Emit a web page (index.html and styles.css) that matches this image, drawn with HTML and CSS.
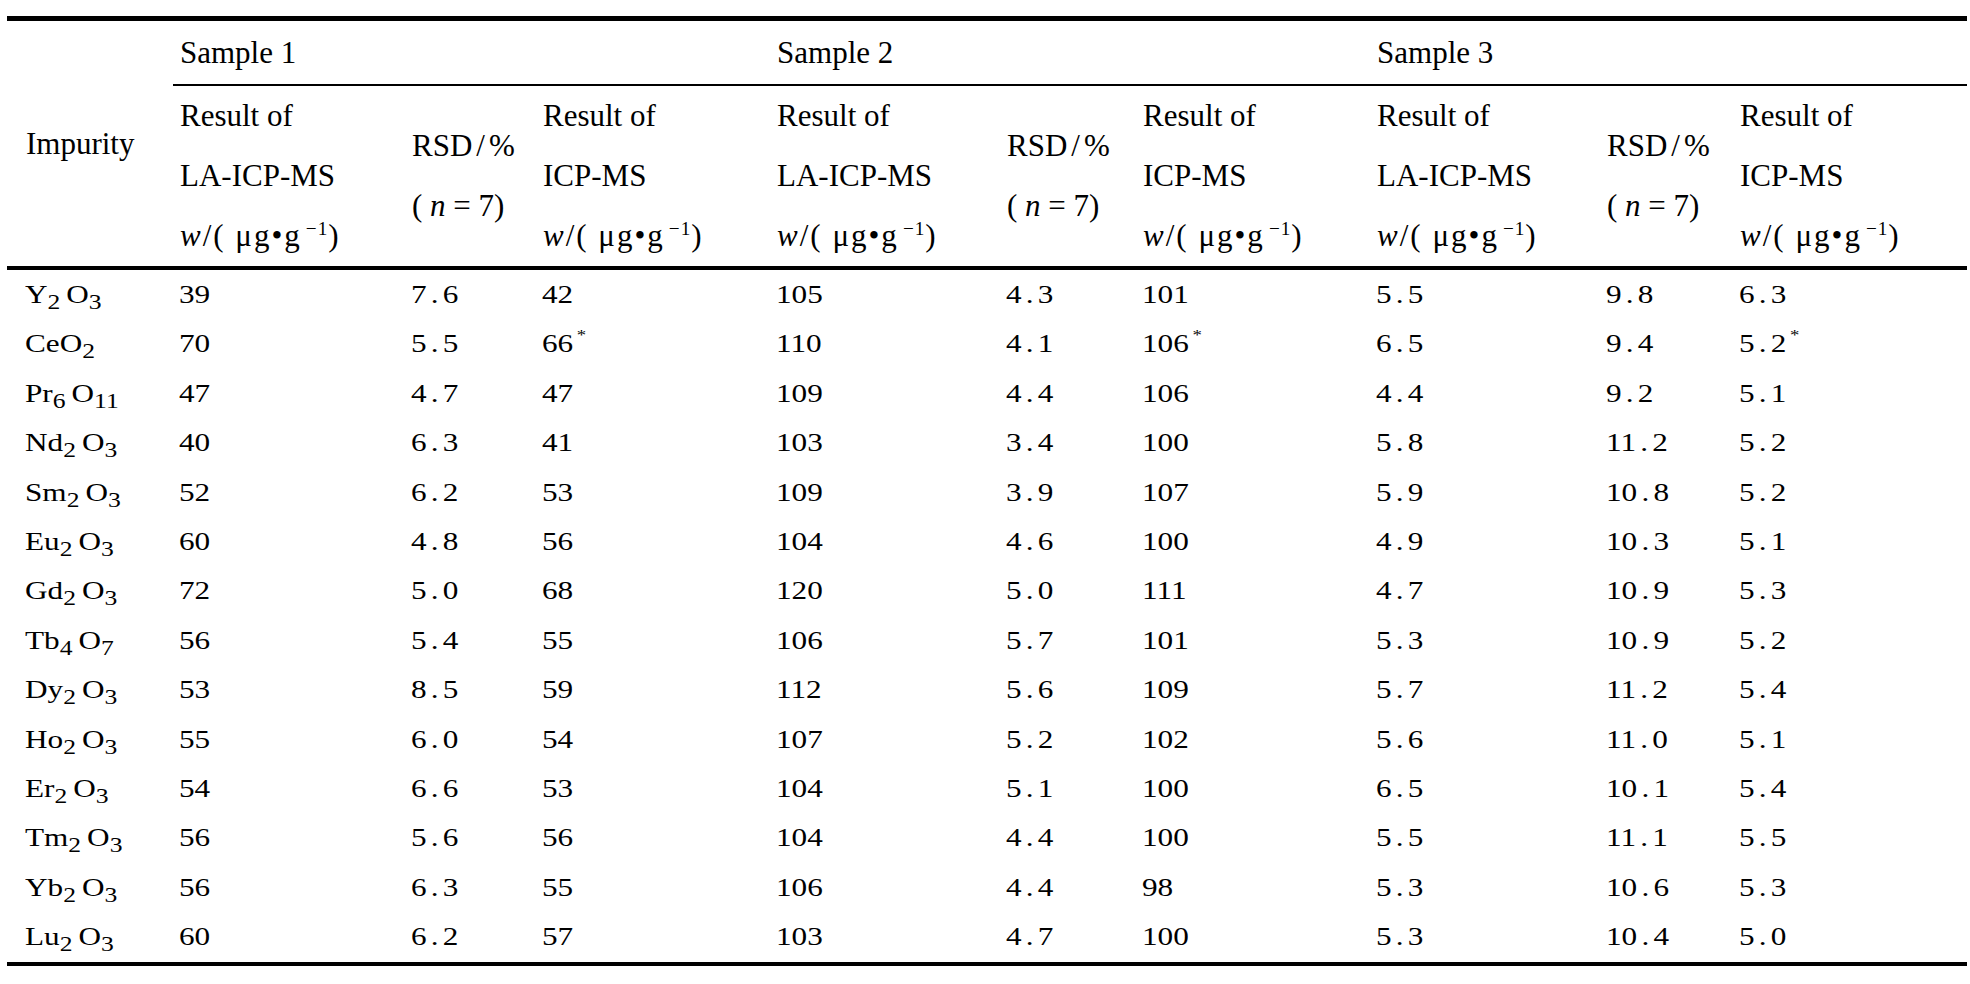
FILE: index.html
```html
<!DOCTYPE html>
<html lang="en">
<head>
<meta charset="utf-8">
<title>Impurity results</title>
<link rel="stylesheet" href="styles.css">
</head>
<body>
<table class="results">
  <colgroup>
    <col class="c-name">
    <col class="c-la"><col class="c-rsd"><col class="c-icp">
    <col class="c-la2"><col class="c-rsd2"><col class="c-icp">
    <col class="c-la2"><col class="c-rsd3"><col class="c-icp">
  </colgroup>
  <thead>
    <tr class="grp">
      <th class="impurity" rowspan="2">Impurity</th>
      <th class="sample" colspan="3">Sample 1</th>
      <th class="sample" colspan="3">Sample 2</th>
      <th class="sample" colspan="3">Sample 3</th>
    </tr>
    <tr class="sub">
      <th>Result of<br>LA-ICP-MS<br><span class="unit"><i>w</i>/( μg•g<sup>−1</sup>)</span></th>
      <th>RSD<span class="sl">/</span>%<br>( <i>n</i> = 7)</th>
      <th>Result of<br>ICP-MS<br><span class="unit"><i>w</i>/( μg•g<sup>−1</sup>)</span></th>
      <th>Result of<br>LA-ICP-MS<br><span class="unit"><i>w</i>/( μg•g<sup>−1</sup>)</span></th>
      <th>RSD<span class="sl">/</span>%<br>( <i>n</i> = 7)</th>
      <th>Result of<br>ICP-MS<br><span class="unit"><i>w</i>/( μg•g<sup>−1</sup>)</span></th>
      <th>Result of<br>LA-ICP-MS<br><span class="unit"><i>w</i>/( μg•g<sup>−1</sup>)</span></th>
      <th>RSD<span class="sl">/</span>%<br>( <i>n</i> = 7)</th>
      <th>Result of<br>ICP-MS<br><span class="unit"><i>w</i>/( μg•g<sup>−1</sup>)</span></th>
    </tr>
  </thead>
  <tbody>
    <tr><td class="name">Y<sub>2</sub>O<sub>3</sub></td><td>39</td><td>7<span class="dp">.</span>6</td><td>42</td><td>105</td><td>4<span class="dp">.</span>3</td><td>101</td><td>5<span class="dp">.</span>5</td><td>9<span class="dp">.</span>8</td><td>6<span class="dp">.</span>3</td></tr>
    <tr><td class="name">CeO<sub>2</sub></td><td>70</td><td>5<span class="dp">.</span>5</td><td>66<sup class="star">*</sup></td><td>110</td><td>4<span class="dp">.</span>1</td><td>106<sup class="star">*</sup></td><td>6<span class="dp">.</span>5</td><td>9<span class="dp">.</span>4</td><td>5<span class="dp">.</span>2<sup class="star">*</sup></td></tr>
    <tr><td class="name">Pr<sub>6</sub>O<sub>11</sub></td><td>47</td><td>4<span class="dp">.</span>7</td><td>47</td><td>109</td><td>4<span class="dp">.</span>4</td><td>106</td><td>4<span class="dp">.</span>4</td><td>9<span class="dp">.</span>2</td><td>5<span class="dp">.</span>1</td></tr>
    <tr><td class="name">Nd<sub>2</sub>O<sub>3</sub></td><td>40</td><td>6<span class="dp">.</span>3</td><td>41</td><td>103</td><td>3<span class="dp">.</span>4</td><td>100</td><td>5<span class="dp">.</span>8</td><td>11<span class="dp">.</span>2</td><td>5<span class="dp">.</span>2</td></tr>
    <tr><td class="name">Sm<sub>2</sub>O<sub>3</sub></td><td>52</td><td>6<span class="dp">.</span>2</td><td>53</td><td>109</td><td>3<span class="dp">.</span>9</td><td>107</td><td>5<span class="dp">.</span>9</td><td>10<span class="dp">.</span>8</td><td>5<span class="dp">.</span>2</td></tr>
    <tr><td class="name">Eu<sub>2</sub>O<sub>3</sub></td><td>60</td><td>4<span class="dp">.</span>8</td><td>56</td><td>104</td><td>4<span class="dp">.</span>6</td><td>100</td><td>4<span class="dp">.</span>9</td><td>10<span class="dp">.</span>3</td><td>5<span class="dp">.</span>1</td></tr>
    <tr><td class="name">Gd<sub>2</sub>O<sub>3</sub></td><td>72</td><td>5<span class="dp">.</span>0</td><td>68</td><td>120</td><td>5<span class="dp">.</span>0</td><td>111</td><td>4<span class="dp">.</span>7</td><td>10<span class="dp">.</span>9</td><td>5<span class="dp">.</span>3</td></tr>
    <tr><td class="name">Tb<sub>4</sub>O<sub>7</sub></td><td>56</td><td>5<span class="dp">.</span>4</td><td>55</td><td>106</td><td>5<span class="dp">.</span>7</td><td>101</td><td>5<span class="dp">.</span>3</td><td>10<span class="dp">.</span>9</td><td>5<span class="dp">.</span>2</td></tr>
    <tr><td class="name">Dy<sub>2</sub>O<sub>3</sub></td><td>53</td><td>8<span class="dp">.</span>5</td><td>59</td><td>112</td><td>5<span class="dp">.</span>6</td><td>109</td><td>5<span class="dp">.</span>7</td><td>11<span class="dp">.</span>2</td><td>5<span class="dp">.</span>4</td></tr>
    <tr><td class="name">Ho<sub>2</sub>O<sub>3</sub></td><td>55</td><td>6<span class="dp">.</span>0</td><td>54</td><td>107</td><td>5<span class="dp">.</span>2</td><td>102</td><td>5<span class="dp">.</span>6</td><td>11<span class="dp">.</span>0</td><td>5<span class="dp">.</span>1</td></tr>
    <tr><td class="name">Er<sub>2</sub>O<sub>3</sub></td><td>54</td><td>6<span class="dp">.</span>6</td><td>53</td><td>104</td><td>5<span class="dp">.</span>1</td><td>100</td><td>6<span class="dp">.</span>5</td><td>10<span class="dp">.</span>1</td><td>5<span class="dp">.</span>4</td></tr>
    <tr><td class="name">Tm<sub>2</sub>O<sub>3</sub></td><td>56</td><td>5<span class="dp">.</span>6</td><td>56</td><td>104</td><td>4<span class="dp">.</span>4</td><td>100</td><td>5<span class="dp">.</span>5</td><td>11<span class="dp">.</span>1</td><td>5<span class="dp">.</span>5</td></tr>
    <tr><td class="name">Yb<sub>2</sub>O<sub>3</sub></td><td>56</td><td>6<span class="dp">.</span>3</td><td>55</td><td>106</td><td>4<span class="dp">.</span>4</td><td>98</td><td>5<span class="dp">.</span>3</td><td>10<span class="dp">.</span>6</td><td>5<span class="dp">.</span>3</td></tr>
    <tr><td class="name">Lu<sub>2</sub>O<sub>3</sub></td><td>60</td><td>6<span class="dp">.</span>2</td><td>57</td><td>103</td><td>4<span class="dp">.</span>7</td><td>100</td><td>5<span class="dp">.</span>3</td><td>10<span class="dp">.</span>4</td><td>5<span class="dp">.</span>0</td></tr>
  </tbody>
</table>
</body>
</html>
```

FILE: styles.css
```css
html, body {
  margin: 0;
  background: #fff;
}

body {
  padding: 16px 6px 0 7px;
  font-family: "Liberation Serif", "Times New Roman", serif;
  color: #000;
}

.results {
  border-collapse: separate;
  border-spacing: 0;
  table-layout: fixed;
  width: 1957px;
  border-top: 5px solid #000;
  border-bottom: 4px solid #000;
}

.c-name { width: 166px; }
.c-la { width: 232px; }
.c-rsd { width: 131px; }
.c-icp { width: 234px; }
.c-la2 { width: 230px; }
.c-rsd2 { width: 136px; }
.c-rsd3 { width: 133px; }

th {
  font-weight: normal;
  text-align: left;
  font-size: 31px;
  line-height: 60px;
  padding: 0 0 0 7px;
  vertical-align: middle;
  white-space: nowrap;
}

.impurity {
  padding-left: 19px;
  border-bottom: 4px solid #000;
}

.sample {
  line-height: 63px;
  border-bottom: 2px solid #000;
}

.sub th {
  border-bottom: 4px solid #000;
}

.sl {
  margin: 0 4px;
}

.unit {
  letter-spacing: 2px;
}

.unit sup {
  font-size: 0.62em;
  line-height: 0;
  vertical-align: 11px;
  margin-left: 4px;
  letter-spacing: 1px;
}

td {
  font-size: 26px;
  line-height: 49.4px;
  height: 49.4px;
  padding: 0 0 0 5px;
  white-space: nowrap;
  transform: scaleX(1.2);
  transform-origin: 0 50%;
}

td.name {
  padding-left: 15px;
}

sub {
  font-size: 0.82em;
  line-height: 0;
  vertical-align: -6px;
  margin-right: 5px;
}

.dp {
  margin: 0 3.5px;
}

.star {
  font-size: 0.6em;
  line-height: 0;
  vertical-align: 12px;
  margin-left: 3px;
}
```
